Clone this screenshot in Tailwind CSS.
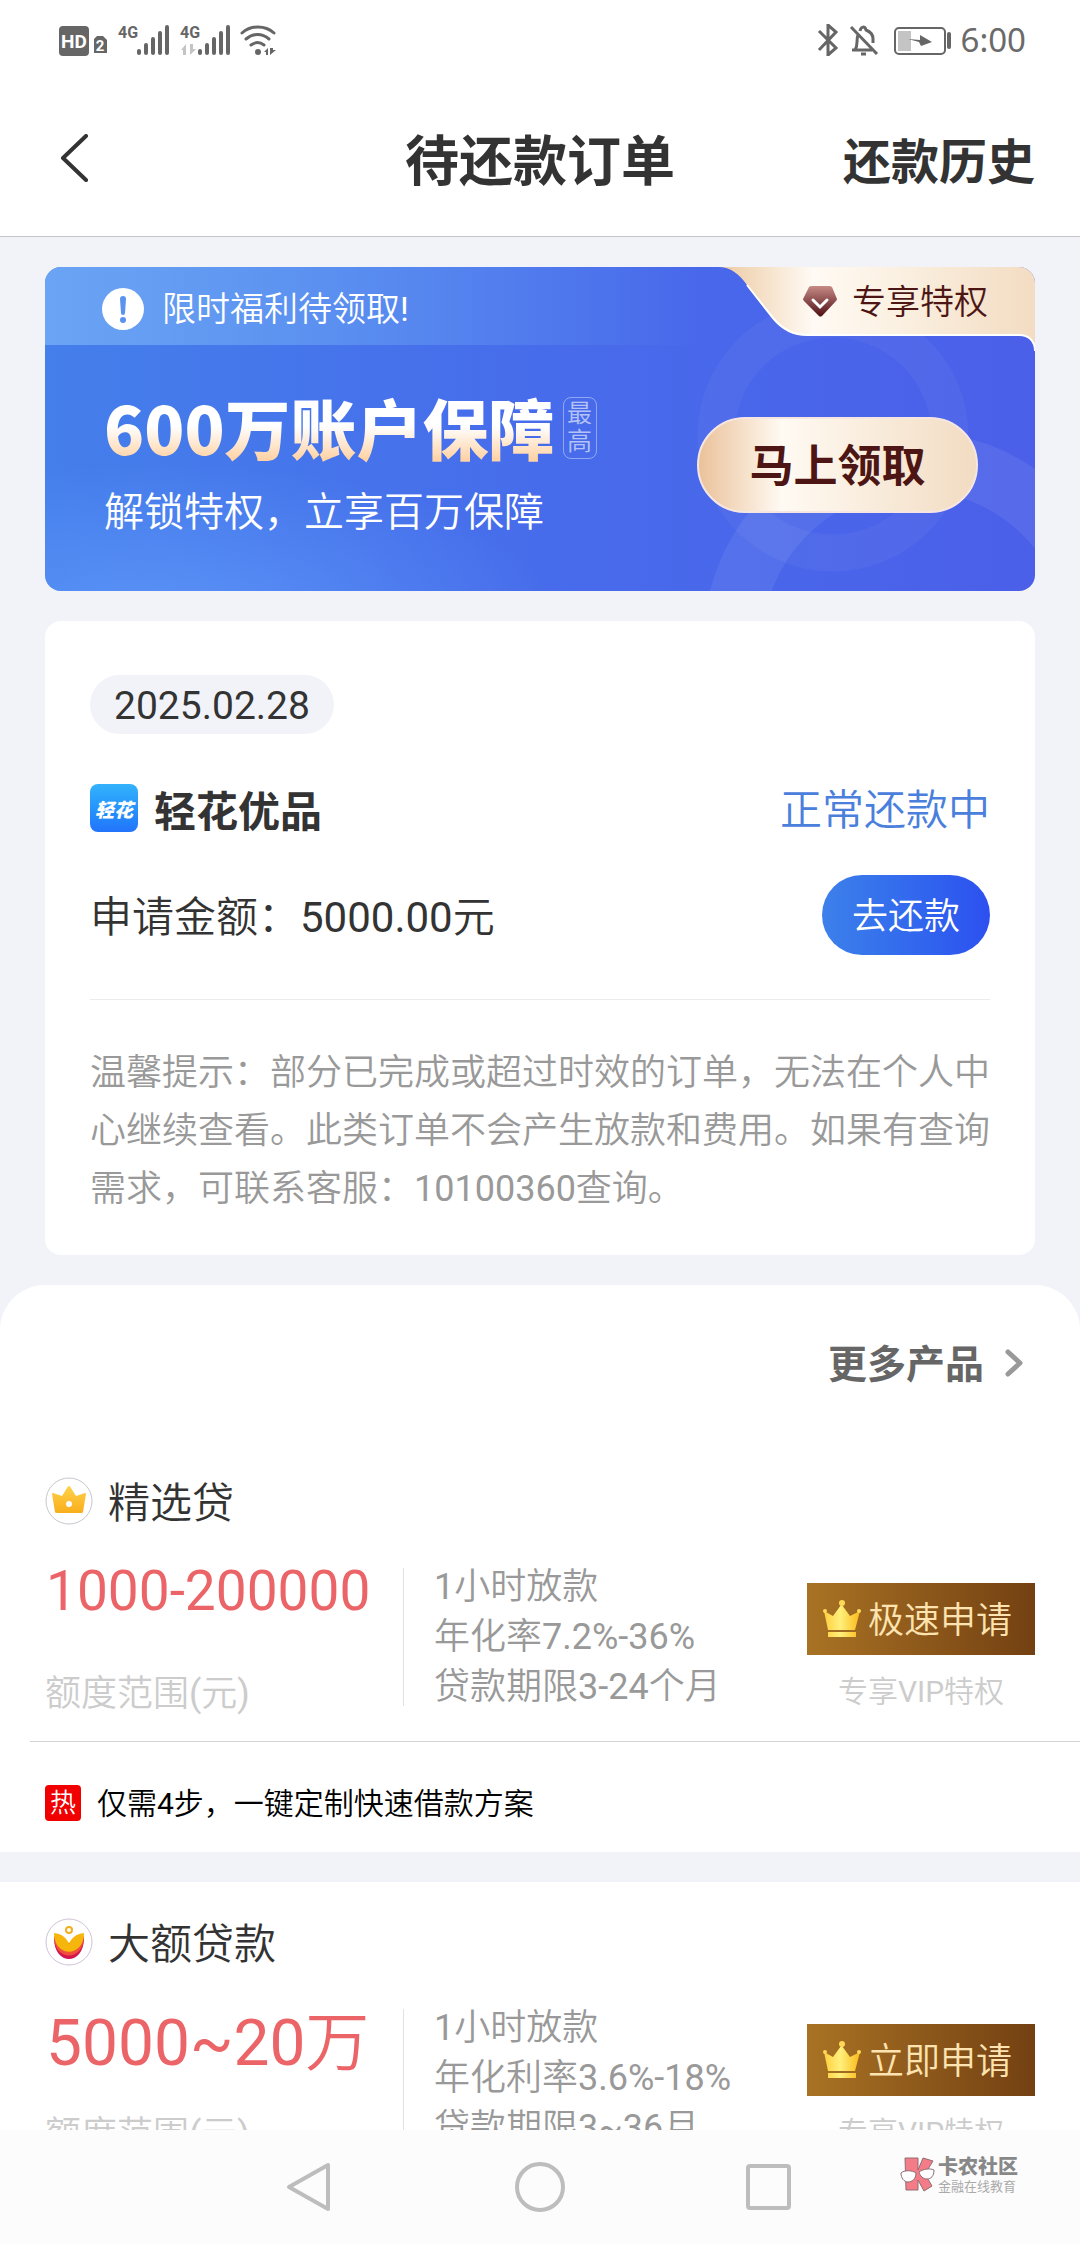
<!DOCTYPE html>
<html lang="zh-CN">
<head>
<meta charset="utf-8">
<meta name="viewport" content="width=device-width, initial-scale=1">
<title>待还款订单</title>
<script src="https://cdn.jsdelivr.net/npm/@tailwindcss/browser@4"></script>
</head>
<body class="flex h-screen flex-col overflow-hidden bg-[#f1f3f8] font-['Roboto','Noto_Sans_CJK_SC_DemiLight','Noto_Sans_CJK_SC',sans-serif] text-[#333]">

<header class="shrink-0 border-b border-[#c4c4c6] bg-white">
  <div class="flex h-20 items-center justify-between pr-[54px] pl-[58px]">
    <svg class="h-8 w-[220px] overflow-visible" viewBox="58 24 220 32" fill="#666" aria-label="信号">
      <rect x="59" y="26" width="30" height="30" rx="4"/>
      <text x="74" y="48" font-size="19" font-weight="700" fill="#fff" text-anchor="middle">HD</text>
      <path d="M94 39l3-3h6l4 4v13h-13z"/>
      <text x="100" y="51" font-size="15" font-weight="700" fill="#fff" text-anchor="middle">2</text>
      <text x="118" y="38" font-size="16" font-weight="700">4G</text>
      <path d="M139 51v2M146 45v8M153 39v14M160 33v20M167 27v26" stroke="#666" stroke-width="4" stroke-linecap="round"/>
      <text x="180" y="38" font-size="16" font-weight="700">4G</text>
      <path d="M181 50l5-6v11h-3v-5zM190 44v11l6-6h-3v-5z" fill="#c4c4c4"/>
      <path d="M200 51v2M207 45v8M214 39v14M221 33v20M228 27v26" stroke="#666" stroke-width="4" stroke-linecap="round"/>
      <path d="M242 33c9-8 23-8 32 0M246 39c7-6 16-6 23 0M251 45c4-3 9-3 13 0" fill="none" stroke="#666" stroke-width="3" stroke-linecap="round"/>
      <circle cx="258" cy="52" r="3"/>
      <path d="M264 52l4-4v7h-2v-3zM270 48v7l6-5h-3v-2z"/>
    </svg>
    <div class="flex items-center gap-2.5">
      <svg class="h-8 w-[134px]" viewBox="816 24 134 32" fill="none" stroke="#666" aria-label="电池">
        <path d="M818 31l17 17-8 7V25l8 7-17 18" stroke-width="3"/>
        <path d="M851 50h20M854 50c2-3 2-5 2-8 0-3 0-5 1-7M859 31c1-5 5-5 6-1 5 2 7 5 7 9v4M850 27l26 27M860 54h5" stroke-width="3"/>
        <rect x="894" y="28" width="50" height="26" rx="4" stroke-width="2"/>
        <path d="M897 31h13v20h-13z" fill="#c4c4c4" stroke="none"/>
        <path d="M907 39l12 1 0-5 12 7-11 4-2-4z" fill="#666" stroke="none"/>
        <path d="M948 34v13" stroke-width="4" stroke-linecap="round"/>
      </svg>
      <time class="font-['Noto_Sans'] text-[33px] leading-8 text-[#6a6a6a]">6:00</time>
    </div>
  </div>
  <div class="grid h-[156px] grid-cols-[1fr_auto_1fr] items-center px-[45px] font-['Noto_Sans_CJK_SC']">
    <button class="flex h-12 w-16 items-center pl-3" aria-label="返回">
      <svg class="h-12 w-8" viewBox="0 0 32 48" fill="none" stroke="#333" stroke-width="4" stroke-linecap="round" stroke-linejoin="round"><path d="M29 2L6 24l23 22"/></svg>
    </button>
    <h1 class="text-[54px] leading-[60px] font-bold">待还款订单</h1>
    <a href="#" class="justify-self-end text-[48px] leading-[60px] font-bold">还款历史</a>
  </div>
</header>

<main class="min-h-0 flex-1 overflow-hidden pt-[30px]">
  <section class="relative mx-[45px] h-[324px] overflow-hidden rounded-2xl bg-linear-to-r from-[#447feb] via-[#476ceb] via-50% to-[#4b5fe9]">
    <div class="absolute inset-0 bg-[radial-gradient(ellipse_at_12%_110%,#6aa3ff99,transparent_32%)]"></div>
    <svg class="absolute top-0 right-0 h-full w-[390px]" viewBox="645 267 390 324" fill="none">
      <defs>
        <linearGradient id="tab" x1="0" x2="1"><stop offset="0" stop-color="#ecc9a0"/><stop offset=".3" stop-color="#fffaf4"/><stop offset=".5" stop-color="#fcf3e6"/><stop offset="1" stop-color="#f3dcc2"/></linearGradient>
        <linearGradient id="gem" x1="0" x2="0" y1="0" y2="1"><stop offset="0" stop-color="#c78b86"/><stop offset="1" stop-color="#4f1015"/></linearGradient>
      </defs>
      <circle cx="833" cy="436" r="117" stroke="#fff" stroke-opacity=".04" stroke-width="37"/>
      <circle cx="915" cy="643" r="182" stroke="#fff" stroke-opacity=".07" stroke-width="59"/>
      <path d="M718 267H1035V351c0-10-6-16-16-16H807c-15 0-25-6-34-17l-26-33c-8-11-16-18-29-18z" fill="url(#tab)"/>
      <path d="M1035 351c0-10-6-16-16-16H807c-15 0-25-6-34-17l-26-33" stroke="#fff" stroke-width="2"/>
      <path d="M809 287q1-1 3-1h17q2 0 3 1l5 12q0 1-1 2l-14 15q-2 1-3 0l-15-15q-1-1-1-2z" fill="url(#gem)"/>
      <path d="M813 300l7 7 7-7" stroke="#fff" stroke-width="3" stroke-linecap="round"/>
    </svg>
    <div class="absolute top-0 right-[47px] flex h-[70px] items-center text-[34px] text-[#4d1614]">专享特权</div>
    <div class="relative flex h-full items-center justify-between">
      <div class="h-full flex-1">
        <div class="flex h-[78px] items-center gap-[18px] bg-linear-to-r from-[#6ba4f4] to-transparent pt-1.5 pl-[57px]">
          <svg class="h-[42px] w-[42px]" viewBox="0 0 42 42"><circle cx="21" cy="21" r="21" fill="#fff"/><path d="M18 11a3 3 0 0 1 6 0l-1 14a2 2 0 0 1-4 0z" fill="#5a93f0"/><circle cx="21" cy="32" r="3" fill="#5a93f0"/></svg>
          <span class="text-[34px] text-white">限时福利待领取!</span>
        </div>
        <div class="mt-10 flex h-[82px] items-center gap-2 pl-[59px]">
          <strong class="bg-linear-to-b from-white from-50% to-[#ffd3a6] to-90% bg-clip-text font-['Noto_Sans_CJK_SC'] text-[66px] leading-[82px] font-black text-transparent">600万账户保障</strong>
          <span class="mt-1 flex h-[62px] w-[34px] flex-col items-center justify-center rounded-lg border border-white/40 text-[25px] leading-[28px] text-white/60"><span>最</span><span>高</span></span>
        </div>
        <p class="mt-4 pl-[59px] text-[40px] leading-[60px] text-white">解锁特权，立享百万保障</p>
      </div>
      <button class="mt-[72px] mr-[57px] h-24 w-[281px] self-center rounded-full border-2 border-[#f6e6e2] bg-linear-to-r from-[#eac29a] via-[#fffaf3] via-30% to-[#f2dcc2] pb-1 font-['Noto_Sans_CJK_SC'] text-[44px] font-bold text-[#4d1614]">马上领取</button>
    </div>
  </section>

  <section class="mx-[45px] mt-[30px] rounded-2xl bg-white px-[45px] pt-[54px] pb-[37px]">
    <time class="flex h-[59px] w-fit items-center rounded-full bg-[#f1f3f8] px-6 pt-1 text-[39px]">2025.02.28</time>
    <div class="mt-11 flex h-[60px] items-center justify-between text-[42px]">
      <div class="flex items-center gap-4">
        <span class="flex h-12 w-12 items-center justify-center rounded-lg bg-linear-to-b from-[#33b2fb] to-[#2374fb] font-['Noto_Sans_CJK_SC'] text-[19px] leading-none font-black text-white italic">轻花</span>
        <h2 class="font-['Noto_Sans_CJK_SC'] font-bold">轻花优品</h2>
      </div>
      <span class="pt-1 text-[#4a80dc]">正常还款中</span>
    </div>
    <div class="mt-[37px] flex h-20 items-center justify-between">
      <p class="pt-1 text-[42px]">申请金额：5000.00元</p>
      <button class="h-20 w-[168px] rounded-full bg-linear-to-r from-[#3d80ea] to-[#2d50f0] pt-1 text-[36px] text-white">去还款</button>
    </div>
    <p class="mt-11 border-t border-[#ececec] pt-11 text-[36px] leading-[58px] text-[#999]">温馨提示：部分已完成或超过时效的订单，无法在个人中心继续查看。此类订单不会产生放款和费用。如果有查询需求，可联系客服：10100360查询。</p>
  </section>

  <section class="mt-[30px]">
    <div class="flex h-[156px] justify-end rounded-t-[45px] bg-white pt-[48px] pr-[56px]">
      <a href="#" class="flex h-[60px] items-center gap-5 font-['Noto_Sans_CJK_SC'] text-[39px] font-bold text-[#666]"><span class="pb-1">更多产品</span>
        <svg class="h-8 w-5" viewBox="0 0 20 32" fill="none" stroke="#999" stroke-width="5" stroke-linecap="round" stroke-linejoin="round"><path d="M4 5l12 11L4 27"/></svg>
      </a>
    </div>

    <article class="bg-white pt-9">
      <div class="flex h-12 items-center gap-[15px] pl-[45px]">
        <svg class="h-12 w-12" viewBox="0 0 48 48"><defs><linearGradient id="c1" x1="0" x2="0" y1="0" y2="1"><stop offset="0" stop-color="#ffd24a"/><stop offset="1" stop-color="#f8ae1c"/></linearGradient></defs><circle cx="24" cy="24" r="23" fill="#fff" stroke="#c6c8ce"/><path d="M24 9q1 0 2 2l5 8 9-3q1 0 1 1l-3 18q0 1-2 1H12q-2 0-2-1L7 17q0-1 1-1l9 3 5-8q1-2 2-2z" fill="url(#c1)"/><circle cx="24" cy="27" r="3" fill="#fff"/></svg>
        <h3 class="pt-1 text-[42px]">精选贷</h3>
      </div>
      <div class="mt-[37px] flex px-[45px]">
        <div class="flex w-[358px] flex-col justify-between">
          <p class="pl-px text-[55px] leading-[58px] text-[#eb6467]">1000-200000</p>
          <p class="text-[36px] leading-9 text-[#ccc]">额度范围(元)</p>
        </div>
        <div class="my-[6px] flex-1 border-l border-[#e2e2e2] pl-[30px] text-[36px] leading-[50px] text-[#999]">
          <div class="-my-[6px]"><p>1小时放款</p><p>年化率7.2%-36%</p><p>贷款期限3-24个月</p></div>
        </div>
        <div class="flex w-[228px] flex-col items-center pt-[21px]">
          <button class="flex h-[72px] w-full items-center gap-1.5 bg-linear-to-r from-[#a97324] to-[#734012] pl-[15px] text-[36px] text-[#fde3b0]">
            <svg class="h-10 w-10" viewBox="0 0 40 40"><defs><linearGradient id="g1" x1="0" x2="1"><stop offset="0" stop-color="#ffce3c"/><stop offset=".45" stop-color="#fff07c"/><stop offset="1" stop-color="#fbb918"/></linearGradient></defs><path d="M2 12l9 5 8-11h1l8 11 10-5-5 19H6zM6 33h28v5H6z" fill="url(#g1)"/><g fill="#ffd858"><circle cx="20" cy="4" r="3"/><circle cx="3" cy="12" r="2"/><circle cx="37" cy="12" r="2"/></g></svg><span class="pt-1">极速申请</span>
          </button>
          <p class="mt-[17px] text-[30px] leading-10 text-[#ccc]">专享VIP特权</p>
        </div>
      </div>
      <div class="mt-[29px] ml-[30px] flex h-[111px] items-center gap-4 border-t border-[#d4d4d4] pt-3 pl-[15px] text-[30px] text-black">
        <span class="flex h-9 w-9 items-center justify-center rounded-sm bg-[#f00000] text-[26px] leading-none font-light text-white">热</span>仅需4步，一键定制快速借款方案
      </div>
    </article>

    <article class="mt-[30px] bg-white pt-9">
      <div class="flex h-12 items-center gap-[15px] pl-[45px]">
        <svg class="h-12 w-12" viewBox="0 0 48 48"><circle cx="24" cy="24" r="23" fill="#fff" stroke="#d0c2d8"/><path d="M9 20c0 28 30 28 30 0l-15 7z" fill="#d3164f"/><path d="M9 18c0 26 30 26 30 0l-15 7z" fill="#f0503a"/><path d="M9 15c0 25 30 25 30 0-8 1-13 5-15 11-2-6-7-10-15-11z" fill="#f7b60c"/><circle cx="24" cy="12" r="3" fill="none" stroke="#f2b01e" stroke-width="2"/></svg>
        <h3 class="pt-1 text-[42px]">大额贷款</h3>
      </div>
      <div class="mt-[37px] flex px-[45px]">
        <div class="flex w-[358px] flex-col justify-between">
          <p class="pl-px text-[64px] leading-[82px] text-[#eb6467]">5000~20万</p>
          <p class="text-[36px] leading-9 text-[#ccc]">额度范围(元)</p>
        </div>
        <div class="my-[6px] flex-1 border-l border-[#e2e2e2] pl-[30px] text-[36px] leading-[50px] text-[#999]">
          <div class="-my-[6px]"><p>1小时放款</p><p>年化利率3.6%-18%</p><p>贷款期限3~36月</p></div>
        </div>
        <div class="flex w-[228px] flex-col items-center pt-[21px]">
          <button class="flex h-[72px] w-full items-center gap-1.5 bg-linear-to-r from-[#a97324] to-[#734012] pl-[15px] text-[36px] text-[#fde3b0]">
            <svg class="h-10 w-10" viewBox="0 0 40 40"><path d="M2 12l9 5 8-11h1l8 11 10-5-5 19H6zM6 33h28v5H6z" fill="url(#g1)"/><g fill="#ffd858"><circle cx="20" cy="4" r="3"/><circle cx="3" cy="12" r="2"/><circle cx="37" cy="12" r="2"/></g></svg><span class="pt-1">立即申请</span>
          </button>
          <p class="mt-[17px] text-[30px] leading-10 text-[#ccc]">专享VIP特权</p>
        </div>
      </div>
    </article>
  </section>
</main>

<nav class="relative flex h-[114px] shrink-0 items-center justify-center gap-[180px] bg-[#fcfcfc]">
  <button aria-label="返回"><svg class="h-[50px] w-[50px]" viewBox="0 0 50 50" fill="none" stroke="#bdbdbd" stroke-width="4" stroke-linejoin="round"><path d="M43 3v44L4 25z"/></svg></button>
  <button aria-label="主页"><svg class="h-[50px] w-[50px]" viewBox="0 0 50 50" fill="none" stroke="#bdbdbd" stroke-width="4"><circle cx="25" cy="25" r="23"/></svg></button>
  <button aria-label="最近任务"><svg class="h-[50px] w-[50px]" viewBox="0 0 50 50" fill="none" stroke="#bdbdbd" stroke-width="4"><rect x="3" y="4" width="41" height="42" rx="2"/></svg></button>
  <div class="absolute top-[24px] right-[62px] flex items-center gap-[3px] text-[#888]">
    <svg class="h-9 w-[35px]" viewBox="0 0 35 36" stroke="#8d6e73"><path d="M5 2h13v12l5-12 10 3-8 13 7 12-8 5-6-11v10H6z" fill="#f47c88"/><path d="M1 17c3-3 11-3 15 0 0 6-4 9-8 9-4 0-7-4-7-9zM19 16c4-3 11-4 15-2 0 6-3 9-7 9-4 0-7-3-8-7z" fill="#fff"/></svg>
    <div class="flex flex-col font-['Noto_Sans_CJK_SC']"><span class="text-[20px] leading-6 font-black">卡农社区</span><span class="text-[13px] leading-4 text-[#aaa]">金融在线教育</span></div>
  </div>
</nav>
</body>
</html>
